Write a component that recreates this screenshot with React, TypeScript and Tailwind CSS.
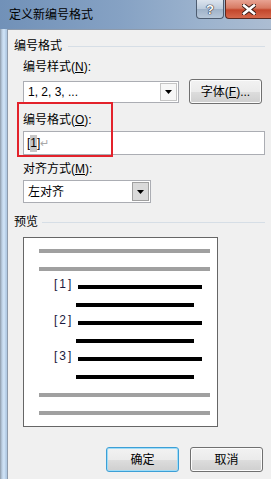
import React from "react";

const font = "font-['Liberation_Sans','Noto_Sans_CJK_SC',sans-serif]";

function Arrow() {
  return (
    <svg width="7" height="4" viewBox="0 0 7 4">
      <path d="M0 0h7L3.5 4z" fill="#000" />
    </svg>
  );
}

function WinButton({ children, primary }: { children: React.ReactNode; primary?: boolean }) {
  return (
    <div
      className={
        primary
          ? "w-[73px] h-[25px] rounded-[3px] border border-[#3c9fd6] shadow-[inset_0_0_0_1px_#9fdcf7] bg-[linear-gradient(#f2f2f2_0%,#ebebeb_50%,#dddddd_51%,#cfcfcf_100%)] flex items-center justify-center text-[12px] leading-[16px] text-black"
          : "w-[73px] h-[25px] rounded-[3px] border border-[#707070] shadow-[inset_0_0_0_1px_#fcfcfc] bg-[linear-gradient(#f2f2f2_0%,#ebebeb_50%,#dddddd_51%,#cfcfcf_100%)] flex items-center justify-center text-[12px] leading-[16px] text-black"
      }
    >
      {children}
    </div>
  );
}

function Section({ label, lineLeft }: { label: string; lineLeft: string }) {
  return (
    <div className="flex items-center pl-[6px] pr-[6px] h-[16px]">
      <span className="text-[12px] leading-[16px]">{label}</span>
      <div className={`flex-1 h-px bg-[#d6dee6] ${lineLeft}`} />
    </div>
  );
}

function GrayLine() {
  return (
    <div className="h-[18px] flex items-center pl-[15px]">
      <div className="w-[171px] h-[4px] bg-[#a0a0a0]" />
    </div>
  );
}

function ShortLine() {
  return (
    <div className="h-[18px] flex items-center pl-[52px]">
      <div className="w-[118px] h-[4px] bg-black" />
    </div>
  );
}

function NumLine({ n }: { n: number }) {
  return (
    <div className="h-[18px] flex items-center pl-[30px]">
      <span className="w-[24px] mb-[6px] text-[12px] leading-[12px] text-[#1a1a40] tracking-[2px]">[{n}]</span>
      <div className="w-[124px] h-[4px] bg-black" />
    </div>
  );
}

export default function App() {
  return (
    <div className={`w-[271px] h-[479px] overflow-hidden flex flex-col text-black ${font}`}>
      {/* title bar */}
      <div className="h-[29px] flex bg-[linear-gradient(90deg,#7191b8_0%,#86a2c4_45%,#9cb3ce_75%,#acbdd2_100%)]">
        <div className="pl-[9px] pt-[7px] text-[12px] leading-[16px]">定义新编号格式</div>
        <div className="ml-auto flex items-start gap-px">
          <div className="w-[28px] h-[19px] rounded-b-[4px] border border-t-0 border-[#4d5c70] bg-[linear-gradient(#dce4ee_0%,#bccbdc_50%,#9fb2c8_51%,#b7c7d9_100%)] flex items-center justify-center">
            <span className="text-[13px] leading-[13px] font-bold text-white [text-shadow:0_0_1px_#223,0_0_1px_#223,0_0_1px_#223]">?</span>
          </div>
          <div className="w-[46px] h-[19px] rounded-bl-[4px] border border-t-0 border-r-0 border-[#5a2a22] bg-[linear-gradient(#e8a393_0%,#d77a63_45%,#c3462c_55%,#d5684c_100%)] flex items-center justify-center">
            <svg width="14" height="11" viewBox="0 0 14 11">
              <path d="M2 1.5l10 8M12 1.5l-10 8" stroke="#3b1a14" strokeWidth="4.5" strokeLinecap="square" />
              <path d="M2 1.5l10 8M12 1.5l-10 8" stroke="#fff" strokeWidth="2.6" strokeLinecap="square" />
            </svg>
          </div>
        </div>
      </div>

      <div className="flex flex-1">
        {/* left frame */}
        <div className="w-[7px] bg-[linear-gradient(90deg,#8d99a7_0px,#bccfe3_2px,#d2e5f8_4px,#b3cbe4_6px)]" />

        {/* client */}
        <div className="relative flex-1 flex flex-col bg-[#f0f0f0] border-l border-t border-[#8d9aab]">
          <div className="mt-[8px]">
            <Section label="编号格式" lineLeft="ml-[6px]" />
          </div>

          <div className="pl-[15px] pr-[6px]">
            <div className="mt-[5px] text-[12px] leading-[16px]">
              编号样式(<u>N</u>):
            </div>
            <div className="mt-[4px] flex items-center">
              <div className="w-[156px] h-[22px] flex border border-[#abadb3] bg-white">
                <div className="flex-1 flex items-center pl-[4px] text-[12px] leading-[16px]">1, 2, 3, ...</div>
                <div className="w-[17px] m-px flex items-center justify-center border border-[#c5c5c5] bg-[#f7f7f7]">
                  <Arrow />
                </div>
              </div>
              <div className="ml-[10px]">
                <WinButton>
                  字体(<u>F</u>)...
                </WinButton>
              </div>
            </div>

            <div className="mt-[8px] text-[12px] leading-[16px]">
              编号格式(<u>O</u>):
            </div>
            <div className="mt-[3px] h-[24px] flex items-center border border-[#abadb3] bg-white pl-[3px] text-[12px] leading-[16px]">
              <span>[</span>
              <span className="bg-[#c6c6c6] leading-[17px]">1</span>
              <span>]</span>
              <span className="text-[#a8a8a8] text-[11px]">↵</span>
            </div>

            <div className="mt-[6px] text-[12px] leading-[16px]">
              对齐方式(<u>M</u>):
            </div>
            <div className="mt-[3px] w-[128px] h-[23px] flex border border-[#abadb3] bg-white">
              <div className="flex-1 flex items-center pl-[4px] text-[12px] leading-[16px]">左对齐</div>
              <div className="w-[17px] m-px flex items-center justify-center border border-[#a0a0a0] bg-[#dadada]">
                <Arrow />
              </div>
            </div>
          </div>

          <div className="mt-[11px]">
            <Section label="预览" lineLeft="ml-[4px]" />
          </div>

          <div className="pl-[15px] mt-[7px]">
            <div className="w-[195px] h-[190px] border border-[#666666] bg-white pt-[4px]">
              <GrayLine />
              <GrayLine />
              <NumLine n={1} />
              <ShortLine />
              <NumLine n={2} />
              <ShortLine />
              <NumLine n={3} />
              <ShortLine />
              <GrayLine />
              <GrayLine />
            </div>
          </div>

          <div className="mt-[20px] flex justify-end gap-[11px] pr-[8px]">
            <WinButton primary>确定</WinButton>
            <WinButton>取消</WinButton>
          </div>

          {/* red highlight overlay */}
          <div className="absolute left-[9px] top-[72px] w-[96px] h-[55px] border-2 border-[#e3222b] pointer-events-none" />
        </div>
      </div>
    </div>
  );
}
